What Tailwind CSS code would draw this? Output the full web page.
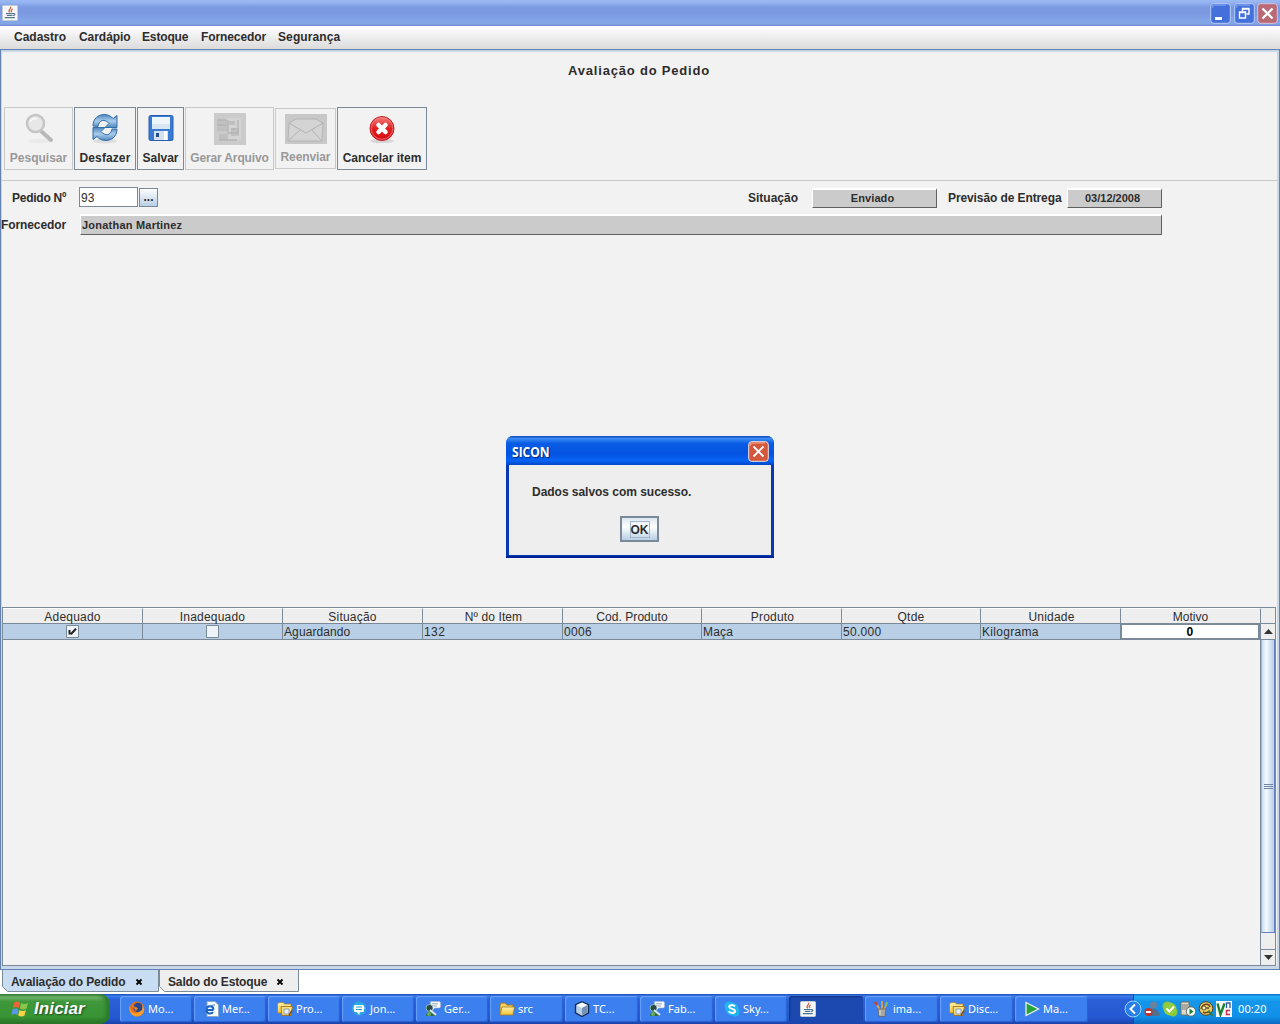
<!DOCTYPE html>
<html lang="pt-BR">
<head>
<meta charset="utf-8">
<title>SICON</title>
<script src="https://cdn.jsdelivr.net/npm/@tailwindcss/browser@4"></script>
</head>
<body class="w-[1280px] h-[1024px] overflow-hidden bg-white font-['Liberation_Sans',sans-serif] text-xs font-bold text-[#2d2d2d] whitespace-nowrap">
<svg class="absolute w-0 h-0">
  <defs>
    <linearGradient id="blueArrow" x1="0" y1="0" x2="0" y2="1"><stop offset="0" stop-color="#4d86bd"/><stop offset=".5" stop-color="#a9cdec"/><stop offset="1" stop-color="#4f86be"/></linearGradient>
    <linearGradient id="redBall" x1="0" y1="0" x2="0" y2="1"><stop offset="0" stop-color="#f58080"/><stop offset=".5" stop-color="#e02020"/><stop offset="1" stop-color="#d60c12"/></linearGradient>
    <linearGradient id="folderFill" x1="0" y1="0" x2="0" y2="1"><stop offset="0" stop-color="#fff3a8"/><stop offset="1" stop-color="#efc03c"/></linearGradient>
    <symbol id="java" viewBox="0 0 16 16"><rect x=".5" y=".5" width="15" height="15" rx="1" fill="#f5f7f8" stroke="#c3ccd4"/><path d="M8.500 1.800c1.500 1.700-3.400 2.700-.7 5.600M10.800 4c-2.200 1-1.800 1.700-.9 3.200" fill="none" stroke="#d9603c" stroke-width="1.300"/><path d="M4 8.500h7M4.800 10.300h5.700M2.800 12.700h10M11 8.700c2.500-.6 2.300 1.700.2 2" fill="none" stroke="#54758f" stroke-width="1.200"/></symbol>
    <symbol id="folders" viewBox="0 0 16 16"><path d="M.5 3 2 1.500h4L7.500 3H14v9H.5z" fill="url(#folderFill)" stroke="#a87a20" stroke-width=".7"/><path d="M4 5.500h11.500L14 14.500H5z" fill="#fbe07a" stroke="#9a6a18" stroke-width=".8"/><path d="M7 8h5v5H7z" fill="#e9eef5" stroke="#6d8299" stroke-width=".7"/><path d="m12 14.500 3-5" stroke="#7e4b17" stroke-width="1.500"/></symbol>
    <symbol id="chat" viewBox="0 0 16 16"><path d="M5.500.5h9l1 1v4.500l-1 1H10L7.500 9V7H5.500z" fill="#f6f8f8" stroke="#b0b8bc" stroke-width=".5"/><path d="M7 2.800h6M7 5h5" stroke="#8295a5" stroke-width=".8"/><circle cx="4.500" cy="7" r="3.500" fill="#284d40" stroke="#a6ccd6" stroke-width=".8"/><path d="M1 15c0-3 2-4.500 4-4.500 3 0 4 2 6 4.500z" fill="#2f6d4d"/><path d="m5 9 6 5" stroke="#dae6ee" stroke-width="2"/><circle cx="4" cy="13" r="2" fill="#6da958"/></symbol>
  </defs>
</svg>
<div class="flex flex-col h-full w-full">
  <header class="h-[26px] shrink-0 flex items-center pl-[2px] pr-[2px] bg-[linear-gradient(#9ab8f3_0%,#96b5f1_8%,#7b9ae2_28%,#7b98e0_50%,#82a5e8_78%,#83a6e8_90%,#738ed0_100%)]">
    <svg class="size-4"><use href="#java"/></svg>
    <div class="ml-auto flex gap-[2px]">
      <svg class="size-[21px] mr-px" viewBox="0 0 21 21"><rect x=".7" y=".7" width="19.600" height="19.600" rx="3" fill="#4470dc" stroke="#b8ccf5"/><path d="M2 5q0-3 3-3h11" fill="none" stroke="#6c92ea" stroke-width="2"/><path d="M5 14h7v3H5z" fill="#fff"/></svg>
      <svg class="size-[21px]" viewBox="0 0 21 21"><rect x=".7" y=".7" width="19.600" height="19.600" rx="3" fill="#4470dc" stroke="#b8ccf5"/><path d="M2 5q0-3 3-3h11" fill="none" stroke="#6c92ea" stroke-width="2"/><path d="M8.500 8V5.500h6.500V11h-2.500M5.500 9h6v6h-6zM5.500 9.500h6M8.500 6H15" fill="none" stroke="#fff" stroke-width="1.400"/></svg>
      <svg class="size-[21px]" viewBox="0 0 21 21"><rect x=".7" y=".7" width="19.600" height="19.600" rx="3" fill="#b96a74" stroke="#dcc3dc"/><path d="m5.500 5.500 10 10m0-10-10 10" stroke="#fff" stroke-width="2.300"/></svg>
    </div>
  </header>
  <nav class="h-[23px] shrink-0 flex items-center pl-[14px] pb-px bg-linear-to-b from-white to-[#dcdcdc]">
    <span class="w-[65px]">Cadastro</span><span class="w-[63px] tracking-[-.05px]">Cardápio</span><span class="w-[59px] tracking-[-.15px]">Estoque</span><span class="w-[77px] tracking-[-.1px]">Fornecedor</span><span class="tracking-[.1px]">Segurança</span>
  </nav>
  <div class="h-[921px] shrink-0 border border-[#6382af] bg-[#c8d7e9] pt-[2px] pb-[3px] pl-px pr-[2px]">
    <main class="h-full bg-[#f2f2f2] flex flex-col relative">
      <h1 class="h-[55px] pt-[11px] pr-[1px] text-center text-[13px] leading-[15px] tracking-[.8px]">Avaliação do Pedido</h1>
      <div class="flex gap-px pl-[2px] items-center h-[63px] leading-[14px]">
        <div class="w-[69px] h-[63px] border border-[#c9c9c9] text-[#999] flex flex-col items-center pt-[5px]">
          <svg class="size-8 shrink-0" viewBox="0 0 32 32"><ellipse cx="17" cy="28" rx="12" ry="2" fill="#e9e9e9"/><path d="m19 19 9 8" stroke="#b8b8b8" stroke-width="4" stroke-linecap="round"/><circle cx="12.500" cy="10.500" r="8.500" fill="#e7e7e7" stroke="#c5c5c5" stroke-width="2.500"/><path d="M7 9c1-3 4-4 7-3" fill="none" stroke="#f7f7f7" stroke-width="2"/></svg>
          <span class="mt-[6px]">Pesquisar</span></div>
        <div class="w-[62px] h-[63px] border border-[#7a8a99] flex flex-col items-center pt-[5px]">
          <svg class="size-8 shrink-0" viewBox="0 0 32 32"><ellipse cx="16" cy="28" rx="12" ry="2.500" fill="#dedede"/><path d="M4 13C4 5 10 1.500 15 1.500c4 0 7 1.500 9 4l4-3v12H16l4-4c-4-5-10-4-11 3z" fill="url(#blueArrow)" stroke="#356fa9"/><path d="M28 16c0 8-6 11.500-11 11.500-4 0-7-1.500-9-4l-4 3v-12h12l-4 4c4 5 10 4 11-2.500z" fill="url(#blueArrow)" stroke="#356fa9"/></svg>
          <span class="mt-[6px] tracking-[.1px]">Desfazer</span></div>
        <div class="w-[47px] h-[63px] border border-[#7a8a99] flex flex-col items-center pt-[5px]">
          <svg class="size-8 shrink-0" viewBox="0 0 32 32"><rect x="4" y="2.500" width="24" height="25" rx="1.500" fill="#397bd0" stroke="#275fb5"/><path d="M7 4h18v12H7z" fill="#edf6fb"/><path d="M7 11h18v5H7z" fill="#d6e7f3"/><path d="M9 18h14v9H9z" fill="#d7e1ee"/><path d="M11 20h3v4h-3z" fill="#214d92"/><path d="M19 18h3v9h-3z" fill="#fff"/></svg>
          <span class="mt-[6px]">Salvar</span></div>
        <div class="w-[89px] h-[63px] border border-[#c9c9c9] text-[#999] flex flex-col items-center pt-[5px]">
          <svg class="size-8 shrink-0" viewBox="0 0 32 32"><path d="M0 0h32v32H0z" fill="#cbcbcb"/><path d="M13 5h14v22H13z" fill="#d3d3d3"/><path d="M3 7h11v11H3zM15 8h6v4h-6zM5 21h9v6H5zM17 15h8v8h-8z" fill="#c0c0c0"/><path d="M3 7h9M3 12h9M14 7v13h10V7M17 16h5M5 27h18" fill="none" stroke="#b4b4b4" stroke-width="1.300"/></svg>
          <span class="mt-[6px] tracking-[-.15px]">Gerar Arquivo</span></div>
        <div class="w-[61px] h-[61px] border border-[#c9c9c9] text-[#999] flex flex-col items-center pt-[5px]">
          <svg class="w-[42px] h-[30px] shrink-0" viewBox="0 0 42 30"><path d="M0 0h42v30H0z" fill="#c8c8c8"/><path d="M4 9 11 5h20l7 4-1 18H3z" fill="#d4d4d4" stroke="#b4b4b4"/><path d="m4 9 17 10L38 9M3 27l12-11m22 11L27 16" fill="none" stroke="#b3b3b3"/></svg>
          <span class="mt-[6px] tracking-[-.1px]">Reenviar</span></div>
        <div class="w-[90px] h-[63px] border border-[#7a8a99] flex flex-col items-center pt-[5px]">
          <svg class="size-8 shrink-0" viewBox="0 0 32 32"><ellipse cx="16" cy="28" rx="12" ry="2" fill="#d9d4d4"/><circle cx="16" cy="15.500" r="12" fill="url(#redBall)" stroke="#bb2026"/><circle cx="16" cy="15.500" r="10.800" fill="none" stroke="#f37c7c" stroke-width=".8"/><path d="m12.500 12 7 7m0-7-7 7" stroke="#fff" stroke-width="4.500" stroke-linecap="round"/></svg>
          <span class="mt-[6px]">Cancelar item</span></div>
      </div>
      <div class="mt-[10px] h-px w-full bg-[#c9c9c9]"></div>
      <div class="mt-[5px] h-[21px] flex items-center">
        <span class="w-[66px] pl-[10px] mr-[11px] mt-[2px] tracking-[-.25px]">Pedido Nº</span>
        <span class="w-[59px] h-5 border border-[#7a8a99] bg-white font-normal leading-[20px] pl-px tracking-[.2px]">93</span>
        <span class="w-[19px] h-[19px] mt-px ml-[1px] border border-[#7a8a99] bg-linear-to-b from-white to-[#b8cfe5] text-center leading-[17px]">...</span>
        <span class="ml-[590px] w-[64px] mt-[2px]">Situação</span>
        <span class="w-[125px] h-[20px] mt-[2px] border-t-2 border-l border-t-white border-l-white border-b border-r border-b-[#606060] border-r-[#606060] bg-[#cbcbcb] pr-[4px] text-center text-[11px] leading-[17px] tracking-[.1px]">Enviado</span>
        <span class="ml-[11px] w-[119px] mt-[2px] tracking-[-.1px]">Previsão de Entrega</span>
        <span class="w-[95px] h-[20px] mt-[2px] border-t-2 border-l border-t-white border-l-white border-b border-r border-b-[#606060] border-r-[#606060] bg-[#cbcbcb] pr-[4px] text-center text-[11px] leading-[17px]">03/12/2008</span>
      </div>
      <div class="mt-[7px] h-[21px] flex items-center">
        <span class="w-[79px] -ml-px mt-px tracking-[-.1px]">Fornecedor</span>
        <span class="w-[1082px] h-[21px] border-t-2 border-l border-t-white border-l-white border-b border-r border-b-[#606060] border-r-[#606060] bg-[#cbcbcb] pl-px text-[11px] leading-[19px] tracking-[.22px]">Jonathan Martinez</span>
      </div>
      <section class="mt-auto w-[1274px] h-[359px] border border-[#7a8a99] font-normal tracking-[.2px] flex flex-col">
        <div class="grid grid-cols-[140px_140px_140px_140px_139px_140px_139px_140px_140px_1fr] h-4 text-center leading-[17px] bg-[#eee] border-b border-[#7a8a99]">
          <span class="border-r border-[#7a8a99] border-t border-t-white">Adequado</span><span class="border-r border-[#7a8a99] border-t border-t-white">Inadequado</span><span class="border-r border-[#7a8a99] border-t border-t-white">Situação</span><span class="border-r border-[#7a8a99] border-t border-t-white pl-[2px] tracking-[.1px]">Nº do Item</span><span class="border-r border-[#7a8a99] border-t border-t-white tracking-[.05px]">Cod. Produto</span><span class="border-r border-[#7a8a99] border-t border-t-white pl-[2px]">Produto</span><span class="border-r border-[#7a8a99] border-t border-t-white">Qtde</span><span class="border-r border-[#7a8a99] border-t border-t-white pl-[2px]">Unidade</span><span class="border-r border-[#7a8a99] border-t border-t-white tracking-normal">Motivo</span><span></span>
        </div>
        <div class="flex flex-1 min-h-0">
          <div class="w-[1258px]">
            <div class="grid grid-cols-[140px_140px_140px_140px_139px_140px_139px_140px_140px] h-4 leading-[17px] bg-[#b8cfe5] border-b border-[#7a8a99] *:h-[15px]">
              <span class="border-r border-[#7a8a99] flex items-center justify-center"><svg class="size-[13px]" viewBox="0 0 13 13"><path d="M.5.5h12v12H.5z" fill="#eef3f8" stroke="#7a8a99"/><path d="M3.500 5v4.500M4.800 9.300 10 3.800" fill="none" stroke="#222" stroke-width="2"/></svg></span>
              <span class="border-r border-[#7a8a99] flex items-center justify-center"><svg class="size-[13px]" viewBox="0 0 13 13"><path d="M.5.5h12v12H.5z" fill="#eef3f8" stroke="#7a8a99"/></svg></span>
              <span class="border-r border-[#7a8a99] pl-px tracking-[.1px]">Aguardando</span><span class="border-r border-[#7a8a99] pl-px tracking-[.4px]">132</span><span class="border-r border-[#7a8a99] pl-px tracking-[.3px]">0006</span><span class="border-r border-[#7a8a99] pl-px">Maça</span><span class="border-r border-[#7a8a99] pl-px tracking-[.3px]">50.000</span><span class="border-r border-[#7a8a99] pl-px tracking-[.3px]">Kilograma</span>
              <span class="-ml-px h-4! w-[140px] border-2 border-[#7a8a99] border-t-1 bg-white text-center font-bold text-black leading-[15px]">0</span>
            </div>
          </div>
          <div class="-ml-px w-[15px] border-l border-[#7a8a99] flex flex-col bg-[#eee]">
            <div class="h-4 flex items-center justify-center border-b border-[#7a8a99]"><svg class="w-[9px] h-[5px]" viewBox="0 0 9 5"><path d="M0 5 4.500 0 9 5z" fill="#333"/></svg></div>
            <div class="h-[293px] border-b border-[#6382bf] border-r border-l border-l-[#a3b8cc] bg-[linear-gradient(90deg,#c8ddf2,#f5faff_35%,#b8cfe5)] flex flex-col gap-px items-center justify-center"><i class="w-[9px] h-px bg-[#6f87a3]"></i><i class="w-[9px] h-px bg-[#6f87a3]"></i><i class="w-[9px] h-px bg-[#6f87a3]"></i></div>
            <div class="h-[16px]"></div>
            <div class="flex-1 border-t border-[#7a8a99] flex items-center justify-center"><svg class="w-[9px] h-[5px]" viewBox="0 0 9 5"><path d="M0 0h9L4.500 5z" fill="#333"/></svg></div>
          </div>
        </div>
      </section>

      <div class="absolute left-[504px] top-[384px] w-[268px] h-[122px] rounded-t-[7px] bg-[#0839b5] border-b-2 border-[#00239a] overflow-hidden flex flex-col">
        <div class="h-[29px] shrink-0 pl-[6px] pr-[5px] flex items-center bg-[linear-gradient(#0846b8_0%,#3b8df5_9%,#0a5ce5_25%,#0553e0_60%,#0663f5_85%,#0345c5_100%)]">
          <span class="mt-[3px] text-white font-['Open_Sans',sans-serif] text-[14px] origin-left scale-x-86 [text-shadow:1px_1px_1px_#06287a]">SICON</span>
          <svg class="size-[21px] ml-auto mt-[2px]" viewBox="0 0 21 21"><rect x=".7" y=".7" width="19.600" height="19.600" rx="3" fill="#d3573a" stroke="#f5e1dc"/><path d="M2 5q0-3 3-3h12" fill="none" stroke="#ed9379" stroke-width="1.500"/><path d="m5.500 5.500 10 10m0-10-10 10" stroke="#fff" stroke-width="1.800"/></svg>
        </div>
        <div class="mx-[3px] mb-px flex-1 bg-[#eee] flex flex-col">
          <span class="mt-[20px] pl-[23px] leading-[14px] tracking-[-.03px]">Dados salvos com sucesso.</span>
          <span class="mt-[17px] ml-[111px] w-[39px] h-[26px] border-2 border-[#7a8a99] bg-linear-to-b from-[#dbe7f3] via-white via-40% to-[#b8cfe5] flex items-center justify-center"><b class="border border-[#a3b8cc] h-[17px] w-[20px] leading-[16px] flex justify-center">OK</b></span>
        </div>
      </div>
    </main>
  </div>
  <div class="h-[24px] shrink-0 bg-white flex pl-[2px] tracking-[-.13px]">
    <div class="relative w-[157px] h-[22px] flex">
      <svg class="absolute inset-0 w-full h-full" viewBox="0 0 157 22"><path d="M.5-1v17.500l5 5h151V-1" fill="#c8ddf2" stroke="#7a8a99"/></svg>
      <span class="relative pl-[9px] leading-[24px] w-[133px]">Avaliação do Pedido</span><svg class="relative mt-[8px] size-[8px]" viewBox="0 0 8 8"><path d="m1.500 1.500 5 5m0-5-5 5" stroke="#000" stroke-width="1.800"/></svg>
    </div>
    <div class="relative w-[141px] h-[22px] flex">
      <svg class="absolute inset-0 w-full h-full" viewBox="0 0 141 22"><path d="M.5-1v17.500l5 5h134V-1" fill="#eee" stroke="#7a8a99"/></svg>
      <span class="relative pl-[9px] leading-[24px] w-[117px]">Saldo do Estoque</span><svg class="relative mt-[8px] size-[8px]" viewBox="0 0 8 8"><path d="m1.500 1.500 5 5m0-5-5 5" stroke="#000" stroke-width="1.800"/></svg>
    </div>
  </div>
  <footer class="h-[30px] shrink-0 flex bg-[linear-gradient(#1d4ab4_0%,#3b7cec_7%,#2a60d8_18%,#2458d2_80%,#1a43aa_100%)] text-white font-normal font-['Noto_Sans',sans-serif] text-[11px]">
    <div class="w-[110px] mr-[10px] rounded-r-[10px] flex items-center pl-[11px] gap-[5px] bg-[linear-gradient(#3a7f38_0%,#70b56c_10%,#3f983b_25%,#389434_75%,#2a7028_100%)] shadow-[inset_-4px_0_4px_#2b7829]">
      <svg class="w-[18px] h-[18px]" viewBox="0 0 18 18"><path d="M3 2.500q3-2 6 0L8 8Q5 6 2 8z" fill="#ed6436"/><path d="M10 3q3 2 7 0l-1.500 5.500q-3 2-6.500 0z" fill="#89c84b"/><path d="M1.500 9.500q3-2 6 0l-1 5.500q-3-2-6 0z" fill="#5797ec"/><path d="M8.500 10q3 2 6.500 0l-1.500 5.500q-3 2-6.300 0z" fill="#f6d244"/></svg>
      <span class="font-['Liberation_Sans',sans-serif] font-bold italic text-[17px] tracking-[.1px] [text-shadow:1px_1px_2px_#1e4b1c]">Iniciar</span>
    </div>
    <div class="grid grid-cols-[72px_72px_72px_72px_72px_73px_73px_73px_72px_74px_73px_73px_73px] w-[968px] h-[26px] mt-[2px] gap-[2px] *:min-w-0 *:flex *:items-center *:gap-[3px] *:pl-[9px] *:rounded-[3px] *:bg-[#3c80f0] *:shadow-[inset_1px_1px_1px_#6ba0f7,inset_-1px_-1px_1px_#2a62d0]">
      <div><svg class="size-4 shrink-0" viewBox="0 0 16 16"><circle cx="8" cy="8" r="7.500" fill="#e26a1a"/><circle cx="9" cy="6.500" r="4.700" fill="#28498f"/><path d="M1 4c0 8 5 9 9 7 4-1 4-5 3-8 4 5 2 12-5 12.500C2 15.500-1 9 1 4z" fill="#f69c28"/><path d="m2 3 4 3 3 1-2 3z" fill="#eb8423"/></svg><span>Mo...</span></div>
      <div><svg class="size-4 shrink-0" viewBox="0 0 16 16"><path d="M4 .5h8l3.500 3.500v11.500H4z" fill="#f7faff" stroke="#8ca6c8"/><path d="M10.500 9H3.500c0-5 6.500-5 7-.5M3.500 9c0 4 5 4.500 6.500 2" fill="none" stroke="#1761be" stroke-width="2"/><path d="M1 13C0 10 8 3 12 4" fill="none" stroke="#397fd1"/></svg><span>Mer...</span></div>
      <div><svg class="size-4 shrink-0"><use href="#folders"/></svg><span>Pro...</span></div>
      <div><svg class="size-4 shrink-0" viewBox="0 0 16 16"><circle cx="8" cy="7.500" r="7" fill="#2aa9e0"/><path d="M3.500 4h9l1 3-1 4H9l-1 3-2-3H3.500l-1-4z" fill="#fff"/><path d="M5 6h6M5 8.500h6" stroke="#2b9fc9" stroke-width="1.200"/></svg><span>Jon...</span></div>
      <div><svg class="size-4 shrink-0"><use href="#chat"/></svg><span>Ger...</span></div>
      <div><svg class="size-4 shrink-0" viewBox="0 0 16 16"><path d="M1 4 2 2h4l2 2h6v9H1z" fill="#f5d25c" stroke="#9e7926"/><path d="M3 6h12.500L14 14H1z" fill="url(#folderFill)" stroke="#9e7926" stroke-width=".8"/></svg><span>src</span></div>
      <div><svg class="size-4 shrink-0" viewBox="0 0 16 16"><path d="m8 .8 6.500 3v8L8 15.500l-6.500-3.700v-8z" fill="#b8cfe6" stroke="#152c53" stroke-width="1.400"/><path d="m8 7 5.500-3L8 1.500 2.500 4z" fill="#f8fbff"/><path d="m8 7 5.500-3v7.300L8 14.500z" fill="#7593b4"/></svg><span>TC...</span></div>
      <div><svg class="size-4 shrink-0"><use href="#chat"/></svg><span>Fab...</span></div>
      <div><svg class="size-4 shrink-0" viewBox="0 0 16 16"><circle cx="5" cy="5" r="4.500" fill="#20b6ed"/><circle cx="11" cy="11" r="4.500" fill="#20b6ed"/><circle cx="8" cy="8" r="6.500" fill="#20b6ed"/><path d="M11 5.500C9.500 3.500 5 3.700 5.200 6c.2 2.300 5.800 1.500 5.800 4 0 2.500-5 2.500-6.200.3" fill="none" stroke="#fff" stroke-width="2"/></svg><span>Sky...</span></div>
      <div class="bg-[#1c49b0]! shadow-[inset_1px_1px_2px_#12347f]! pl-[11px]!"><svg class="size-4 shrink-0"><use href="#java"/></svg></div>
      <div><svg class="size-4 shrink-0" viewBox="0 0 16 16"><path d="m2 2 4 7M8 0v9m5-7-3 7" stroke="#d7a24d" stroke-width="1.800"/><path d="m1 1 2 3" stroke="#d53d2b" stroke-width="2.500"/><path d="m13 1-1.500 4" stroke="#7bc260" stroke-width="2"/><path d="M4 8h8l-1 7.500H5z" fill="#a5a9a1" stroke="#645d54" stroke-width=".7"/><path d="M6 9v5" stroke="#e7e7e7"/></svg><span>ima...</span></div>
      <div><svg class="size-4 shrink-0"><use href="#folders"/></svg><span>Disc...</span></div>
      <div><svg class="size-4 shrink-0" viewBox="0 0 16 16"><path d="m2 1.500 12.500 6.500L2 14.500z" fill="#27a33e" stroke="#eaf5ea" stroke-width="1.300"/></svg><span>Ma...</span></div>
    </div>
    <div class="ml-auto w-[147px] flex items-center border-l border-[#104aab] bg-[linear-gradient(#1460c8_0%,#20b0f5_8%,#1595ea_25%,#1190e9_75%,#0b69c0_100%)]">
      <svg class="-ml-[10px] size-[18px] shrink-0" viewBox="0 0 18 18"><circle cx="9" cy="9" r="8" fill="#277ee7" stroke="#9ad3fb"/><path d="m11 4.500-4.500 4.500L11 13.500" fill="none" stroke="#fff" stroke-width="2"/></svg>
      <svg class="size-4 shrink-0 ml-[2px]" viewBox="0 0 16 16"><circle cx="9.500" cy="4" r="3.500" fill="#6b8297"/><path d="M5 15c0-5 2-7.500 4.500-7.500s6 2 6 7.500z" fill="#52708c"/><circle cx="4.500" cy="11" r="4" fill="#c3332b"/><path d="M2 11h5" stroke="#fff" stroke-width="2"/></svg>
      <svg class="size-4 shrink-0 ml-[2px]" viewBox="0 0 16 16"><circle cx="5" cy="5" r="4.500" fill="#85c63a"/><circle cx="11" cy="11" r="4.500" fill="#85c63a"/><circle cx="8" cy="8" r="6.500" fill="#91cd40"/><path d="m4.500 7.500 3 3 4.500-5" fill="none" stroke="#fff" stroke-width="2"/></svg>
      <svg class="size-4 shrink-0 ml-[2px]" viewBox="0 0 16 16"><path d="M1 1h8v13H1z" fill="#ded9cb" stroke="#756e60"/><path d="M2 4h6M2 6h6M2 8h5" stroke="#7b7a71"/><circle cx="11" cy="10.500" r="4.700" fill="#f8f8f8" stroke="#5c695d"/><path d="m9.500 7.500 4 3-4 3z" fill="#168230"/></svg>
      <svg class="size-4 shrink-0 ml-[2px]" viewBox="0 0 16 16"><circle cx="8" cy="7.500" r="6.800" fill="#e8ce62" stroke="#50431f"/><path d="M3 8c2-6 8-6 9-2M5 11c3 2 5 0 7-1M7 7h4" fill="none" stroke="#70461c" stroke-width="1.600"/><circle cx="6" cy="7" r="2" fill="#fff8dc" stroke="#635120"/><path d="m10 10 5 5" stroke="#3a7942" stroke-width="2"/></svg>
      <svg class="size-4 shrink-0 ml-[2px]" viewBox="0 0 16 16"><path d="M0 0h16v16H0z" fill="#f8f8f8"/><path d="m1.500 2.500 3 11 4-11" fill="none" stroke="#15802d" stroke-width="2.300"/><path d="M10.500 7V2h3.500v5" fill="none" stroke="#3158a8" stroke-width="1.300"/><path d="M14 9.500h-3.500v4H14" fill="none" stroke="#c82b47" stroke-width="1.400"/></svg>
      <span class="ml-[6px] tracking-[.1px]">00:20</span>
    </div>
  </footer>
</div>
</body>
</html>
